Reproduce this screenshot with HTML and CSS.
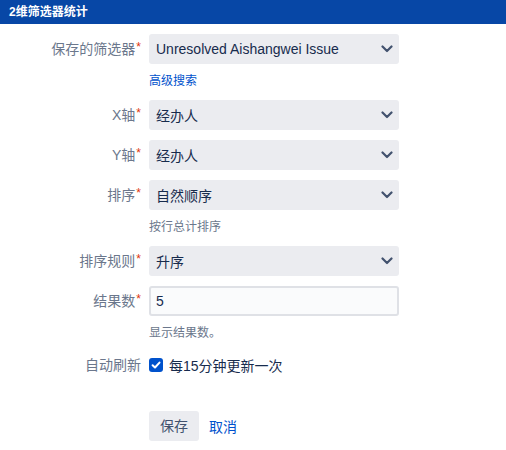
FILE: index.html
```html
<!DOCTYPE html>
<html lang="zh">
<head>
<meta charset="utf-8">
<link rel="stylesheet" href="styles.css">
</head>
<body>
<div class="header">2维筛选器统计</div>
<form class="form">
  <div class="group">
    <label class="label">保存的筛选器<span class="req">*</span></label>
    <div class="field">
      <div class="select"><span class="select-text latin">Unresolved Aishangwei Issue</span><svg class="chev" viewBox="0 0 12 8"><path d="M1.5 1.5 L6 6 L10.5 1.5" /></svg></div>
      <a class="link desc-line" href="#">高级搜索</a>
    </div>
  </div>
  <div class="group">
    <label class="label">X轴<span class="req">*</span></label>
    <div class="field">
      <div class="select"><span class="select-text">经办人</span><svg class="chev" viewBox="0 0 12 8"><path d="M1.5 1.5 L6 6 L10.5 1.5" /></svg></div>
    </div>
  </div>
  <div class="group">
    <label class="label">Y轴<span class="req">*</span></label>
    <div class="field">
      <div class="select"><span class="select-text">经办人</span><svg class="chev" viewBox="0 0 12 8"><path d="M1.5 1.5 L6 6 L10.5 1.5" /></svg></div>
    </div>
  </div>
  <div class="group">
    <label class="label">排序<span class="req">*</span></label>
    <div class="field">
      <div class="select"><span class="select-text">自然顺序</span><svg class="chev" viewBox="0 0 12 8"><path d="M1.5 1.5 L6 6 L10.5 1.5" /></svg></div>
      <div class="desc desc-line">按行总计排序</div>
    </div>
  </div>
  <div class="group">
    <label class="label">排序规则<span class="req">*</span></label>
    <div class="field">
      <div class="select"><span class="select-text">升序</span><svg class="chev" viewBox="0 0 12 8"><path d="M1.5 1.5 L6 6 L10.5 1.5" /></svg></div>
    </div>
  </div>
  <div class="group">
    <label class="label">结果数<span class="req">*</span></label>
    <div class="field">
      <div class="input">5</div>
      <div class="desc desc-line">显示结果数。</div>
    </div>
  </div>
  <div class="group check-group">
    <label class="label">自动刷新</label>
    <div class="field check-field">
      <span class="checkbox"><svg viewBox="0 0 14 14"><path d="M3.6 7.2 L6 9.5 L10.5 4.6" /></svg></span>
      <span class="check-text">每15分钟更新一次</span>
    </div>
  </div>
  <div class="buttons">
    <span class="btn">保存</span>
    <a class="link cancel" href="#">取消</a>
  </div>
</form>
</body>
</html>
```
FILE: styles.css
```css
* { box-sizing: border-box; }
body {
  margin: 0;
  background: #fff;
  font-family: "Liberation Sans", "Noto Sans CJK SC", sans-serif;
  font-size: 14px;
  color: #172b4d;
}
.header {
  height: 24px;
  background: #0747a6;
  color: #fff;
  font-weight: bold;
  font-size: 12px;
  line-height: 24px;
  padding-left: 9px;
}
.form {
  padding-top: 10px;
}
.group {
  display: grid;
  grid-template-columns: 141px 250px;
  column-gap: 8px;
  margin-bottom: 10px;
}
.label {
  text-align: right;
  color: #6b778c;
  height: 30px;
  line-height: 30px;
  font-size: 14px;
}
.req {
  color: #de350b;
  font-size: 12px;
  line-height: 0;
  vertical-align: 3px;
  margin-left: 1px;
}
.field {
  display: flex;
  flex-direction: column;
}
.select {
  height: 30px;
  background: #ebecf0;
  border-radius: 3px;
  display: flex;
  align-items: center;
  padding: 0 6px 0 7px;
}
.select-text {
  flex: 1;
  color: #172b4d;
}
.chev {
  width: 12px;
  height: 8px;
  fill: none;
  stroke: #42526e;
  stroke-width: 2.2;
  stroke-linecap: round;
  stroke-linejoin: round;
}
.input {
  height: 30px;
  background: #fafbfc;
  border: 2px solid #dfe1e6;
  border-radius: 3px;
  line-height: 26px;
  padding-left: 5px;
  color: #172b4d;
}
.desc-line {
  margin-top: 9px;
  margin-bottom: 1px;
  height: 16px;
  line-height: 16px;
  font-size: 12px;
}
.desc { color: #6b778c; }
.link {
  color: #0052cc;
  text-decoration: none;
}
.check-group { margin-top: 13px; }
.check-group .label { height: 20px; line-height: 20px; }
.check-field {
  flex-direction: row;
  align-items: center;
  height: 20px;
}
.checkbox {
  width: 14px;
  height: 14px;
  border-radius: 3px;
  background: #0052cc;
  display: inline-flex;
}
.checkbox svg {
  width: 14px;
  height: 14px;
  fill: none;
  stroke: #fff;
  stroke-width: 2;
  stroke-linecap: round;
  stroke-linejoin: round;
}
.check-text {
  margin-left: 6px;
  color: #172b4d;
}
.buttons {
  display: flex;
  align-items: center;
  margin-top: 36px;
  padding-left: 149px;
  gap: 10px;
}
.btn {
  height: 30px;
  line-height: 30px;
  padding: 0 11px;
  background: #ebecf0;
  border-radius: 3px;
  color: #42526e;
}
.cancel { font-size: 14px; }
```
